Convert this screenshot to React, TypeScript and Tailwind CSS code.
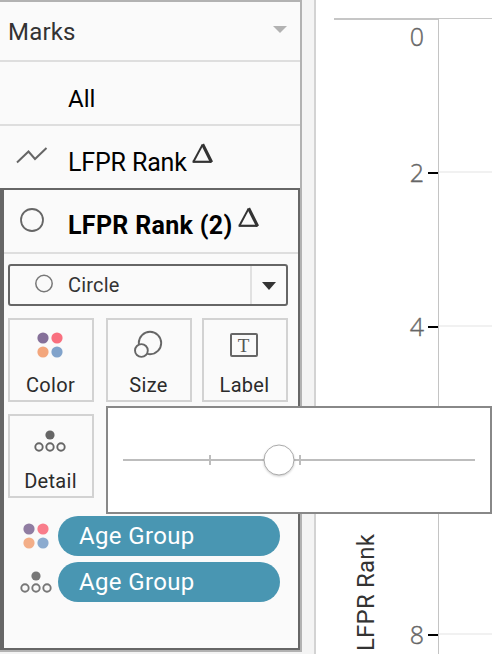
import type { ReactNode } from "react";

const delta = (
  <svg width="22" height="22" viewBox="0 0 22 22" fill="none" className="shrink-0">
    <path d="M1.4 19.8 10.6 2.6" stroke="#333" strokeWidth="2" />
    <path d="M.6 19.8H19.5" stroke="#333" strokeWidth="2.2" />
    <path d="M10.6 2.2 19.6 20.2" stroke="#333" strokeWidth="3.2" />
  </svg>
);

function ColorDots({ faded = false }: { faded?: boolean }) {
  return (
    <svg width="26" height="26" viewBox="0 0 26 26" opacity={faded ? 0.9 : 1}>
      <circle cx="6" cy="6" r="5.6" fill="#857099" />
      <circle cx="20" cy="6" r="5.6" fill="#f9707f" />
      <circle cx="6" cy="20" r="5.6" fill="#f3a67c" />
      <circle cx="20" cy="20" r="5.6" fill="#81a3cb" />
    </svg>
  );
}

function DetailDots({ color }: { color: string }) {
  return (
    <svg width="32" height="22" viewBox="0 0 32 22" fill="none" stroke={color} strokeWidth="1.9">
      <circle cx="16" cy="5" r="4.6" fill={color} stroke="none" />
      <circle cx="5" cy="17" r="3.7" />
      <circle cx="16" cy="17" r="3.7" />
      <circle cx="27" cy="17" r="3.7" />
    </svg>
  );
}

function Card({ label, children }: { label: string; children: ReactNode }) {
  return (
    <div className="flex h-[84px] w-[86px] flex-col items-center border-2 border-[#d2d2d2]">
      <div className="flex h-[52px] items-center justify-center pr-[3px] pb-[2px]">{children}</div>
      <span className="pr-px text-[20px] leading-[26px] tracking-[0.3px] text-[#2b2b2b]">{label}</span>
    </div>
  );
}

function Pill({ children }: { children: ReactNode }) {
  return (
    <div className="flex h-10 items-center">
      <div className="flex w-[54px] justify-center pb-px pl-[9px]">{children}</div>
      <div className="h-10 w-[222px] rounded-full bg-[#4996b2] pl-[21px] text-[24px] leading-[40px] tracking-[0.35px] text-white">
        Age Group
      </div>
    </div>
  );
}

function Chart() {
  return (
    <svg width="176" height="654" viewBox="316 0 176 654" className="shrink-0 bg-white">
      <g shapeRendering="crispEdges">
        <rect x="334" y="18" width="104" height="2" fill="#c6c6c6" />
        <rect x="438" y="18" width="54" height="1" fill="#c8c8c8" />
        {[171, 325, 479, 633].map((y) => (
          <g key={y}>
            <rect x="439" y={y} width="53" height="2" fill="#f1f1f1" />
            <rect x="428" y={y + 1} width="10" height="2" fill="#000" />
          </g>
        ))}
        <rect x="438" y="18" width="1" height="636" fill="#c4c4c4" />
      </g>
      <g
        fontSize="25"
        fill="#666"
        stroke="#666"
        strokeWidth="0.4"
        textAnchor="middle"
        className="font-['Open_Sans',sans-serif] font-light"
      >
        <text x="416.8" y="46">0</text>
        <text x="416.8" y="182">2</text>
        <text x="416.8" y="336">4</text>
        <text x="416.8" y="490">6</text>
        <text x="416.8" y="644">8</text>
      </g>
      <text transform="translate(374 651) rotate(-90)" fontSize="24" fill="#333" textLength="117">
        LFPR Rank
      </text>
    </svg>
  );
}

export default function App() {
  return (
    <div className="relative flex h-[654px] w-[492px] overflow-hidden bg-white font-['Roboto',sans-serif]">
      <aside className="h-full w-[316px] shrink-0 border-r-2 border-[#d3d3d3] bg-[#f4f4f4]">
        <section className="h-[652px] w-[302px] border-y-2 border-r-2 border-[#b2b2b2] bg-[#fafafa]">
          <header className="flex h-[60px] items-center justify-between border-b-2 border-[#dedede] pr-[13px] pl-[8px]">
            <span className="pt-0.5 text-[24px] leading-[30px] tracking-[0.2px] text-[#333]">Marks</span>
            <svg width="14" height="7" className="-mt-1">
              <path d="M0 0h14L7 7z" fill="#b2b2b2" />
            </svg>
          </header>
          <div className="h-16 border-b-2 border-[#dedede] pt-5 pl-[68px] text-[24px] leading-[34px] text-black">All</div>
          <div className="flex h-[62px]">
            <svg width="68" height="62" fill="none">
              <path d="M17 36.5 28.5 25.5 35 33 46.5 22" stroke="#666" strokeWidth="2" />
            </svg>
            <span className="pt-5 text-[25px] leading-[34px] tracking-[-0.15px] whitespace-nowrap text-black">LFPR Rank</span>
            <div className="pt-[16px] pl-[5px]">{delta}</div>
          </div>
          <div className="h-[462px] w-[300px] border-y-2 border-r-2 border-l-4 border-[#666]">
            <div className="flex h-16 border-b-2 border-[#dedede]">
              <svg width="64" height="62" fill="none" className="shrink-0">
                <circle cx="28" cy="30" r="11" stroke="#666" strokeWidth="1.8" />
              </svg>
              <span className="pt-[19px] text-[25px] leading-[34px] font-bold tracking-[0.32px] whitespace-nowrap text-black">
                LFPR Rank (2)
              </span>
              <div className="pt-[16px] pl-[5px]">{delta}</div>
            </div>
            <div className="mt-[10px] ml-1 flex h-[42px] w-[280px] items-center rounded-[3px] border-2 border-[#666]">
              <svg width="58" height="38" fill="none">
                <circle cx="34" cy="17.5" r="8.2" stroke="#777" strokeWidth="1.5" />
              </svg>
              <span className="flex-1 text-[20px] tracking-[0.2px] text-[#333]">Circle</span>
              <div className="flex h-full w-[36px] items-center justify-center border-l-2 border-[#e1e1e1]">
                <svg width="14" height="8" className="mt-0.5">
                  <path d="M0 0h14L7 8z" fill="#333" />
                </svg>
              </div>
            </div>
            <div className="mt-3 ml-1 grid w-[280px] grid-cols-[98px_96px_86px] gap-y-3">
              <Card label="Color">
                <ColorDots />
              </Card>
              <Card label="Size">
                <svg width="30" height="30" viewBox="0 0 30 30" fill="none" stroke="#666" strokeWidth="1.9">
                  <circle cx="17" cy="13" r="11.2" />
                  <circle cx="8.4" cy="20.5" r="6.4" fill="#fafafa" />
                </svg>
              </Card>
              <Card label="Label">
                <div className="flex h-6 w-7 items-center justify-center rounded-[2px] border-2 border-[#666] font-['Liberation_Serif',serif] text-[19px] leading-none text-[#555]">
                  T
                </div>
              </Card>
              <Card label="Detail">
                <DetailDots color="#666" />
              </Card>
            </div>
            <div className="mt-[18px] flex flex-col gap-[6px]">
              <Pill>
                <ColorDots faded />
              </Pill>
              <Pill>
                <DetailDots color="#777" />
              </Pill>
            </div>
          </div>
        </section>
      </aside>
      <Chart />
      <div className="absolute top-[406px] left-[106px] h-[108px] w-[386px] border-2 border-[#888] bg-white">
        <svg width="382" height="104" viewBox="108 408 382 104">
          <path d="M123 460H475M210 455v10M300 455v10" stroke="#bdbdbd" strokeWidth="2" />
          <circle cx="279" cy="460" r="15" fill="#fff" stroke="#aaa" className="drop-shadow-[0_1px_1px_rgba(0,0,0,0.2)]" />
        </svg>
      </div>
    </div>
  );
}
